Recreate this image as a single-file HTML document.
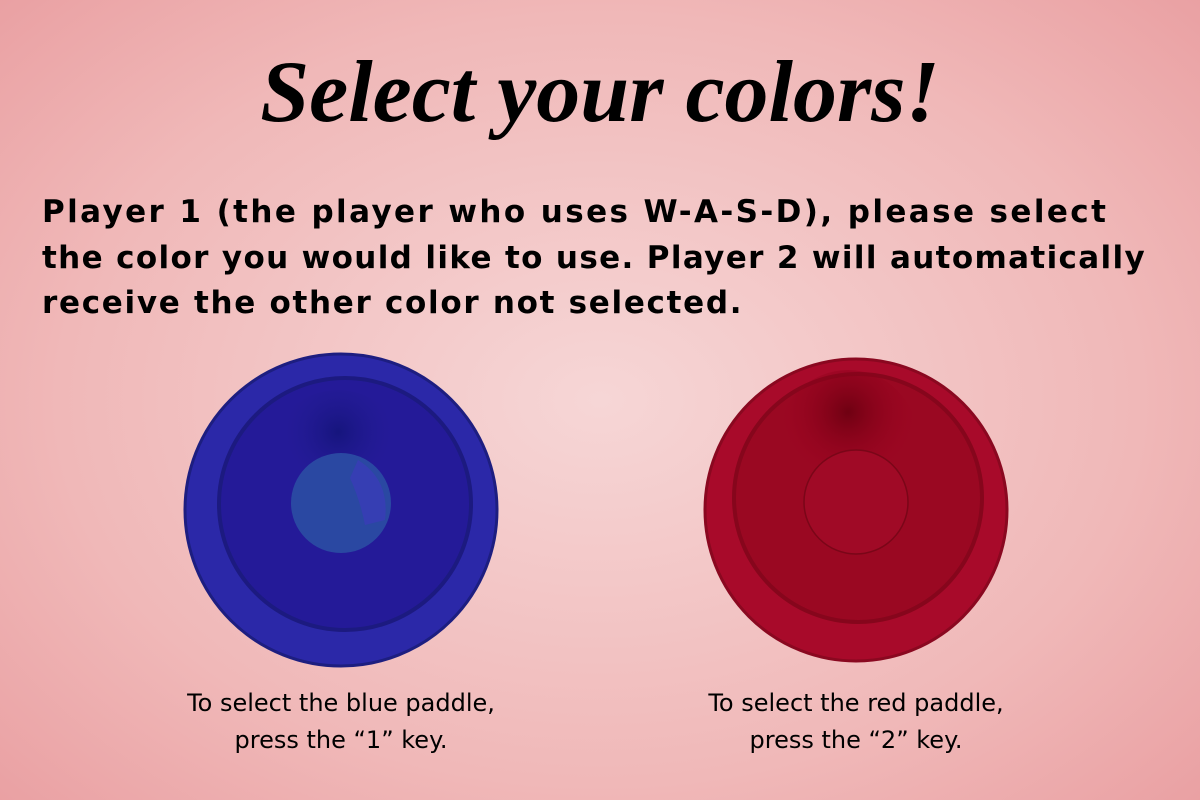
<!DOCTYPE html>
<html><head><meta charset="utf-8"><style>
html,body{margin:0;padding:0}
body{width:1200px;height:800px;overflow:hidden;position:relative;
background:radial-gradient(ellipse 75% 80% at 50% 50%,#f6d6d6 0%,#f0b8b8 60%,#e89a9d 100%);
font-family:"DejaVu Sans","Liberation Sans",sans-serif;color:#000}
h1{position:absolute;left:0;width:1200px;top:38px;margin:0;text-align:center;
font-family:"Liberation Serif",serif;font-style:italic;font-weight:bold;font-size:88px;line-height:110px;letter-spacing:0px}
.p{position:absolute;left:42px;top:190px;width:1150px;font-weight:bold;font-size:31px;line-height:45.5px;white-space:nowrap}
.cap{position:absolute;width:400px;text-align:center;font-size:24px;line-height:37px;top:685px}
</style></head><body>
<h1>Select your colors!</h1>
<div class="p"><span style="letter-spacing:2.4px">Player 1 (the player who uses W-A-S-D), please select</span><br><span style="letter-spacing:1.35px">the color you would like to use. Player 2 will automatically</span><br><span style="letter-spacing:1.7px">receive the other color not selected.</span></div>

<svg style="position:absolute;left:0;top:0" width="1200" height="800">
<defs>
<radialGradient id="bsh" cx="0.5" cy="0.3" r="0.5"><stop offset="0" stop-color="#14147a" stop-opacity="0.9"/><stop offset="1" stop-color="#2a1ea0" stop-opacity="0"/></radialGradient>
<radialGradient id="rsh" cx="0.5" cy="0.3" r="0.5"><stop offset="0" stop-color="#6a0010" stop-opacity="0.9"/><stop offset="1" stop-color="#a00020" stop-opacity="0"/></radialGradient>
</defs>
<circle cx="341" cy="510" r="156" fill="#2b28a8" stroke="#1d1e80" stroke-width="3"/>
<circle cx="345" cy="504" r="126" fill="#241a98" stroke="#1c1a80" stroke-width="4"/>
<ellipse cx="338" cy="460" rx="70" ry="70" fill="url(#bsh)"/>
<circle cx="341" cy="503" r="50" fill="#2a48a2"/>
<path d="M358 460 Q390 480 385 520 L365 525 Q360 500 350 478 Z" fill="#3a3cb8" opacity="0.8"/>

<circle cx="856" cy="510" r="151" fill="#a80a2a" stroke="#8a0820" stroke-width="3"/>
<circle cx="858" cy="498" r="124" fill="#9a0822" stroke="#86061c" stroke-width="4"/>
<ellipse cx="848" cy="440" rx="70" ry="70" fill="url(#rsh)"/>
<circle cx="856" cy="502" r="52" fill="#a00a26" stroke="#7a0618" stroke-width="1.5"/>
</svg>

<div class="cap" style="left:141px">To select the blue paddle,<br>press the “1” key.</div>
<div class="cap" style="left:656px">To select the red paddle,<br>press the “2” key.</div>
</body></html>
